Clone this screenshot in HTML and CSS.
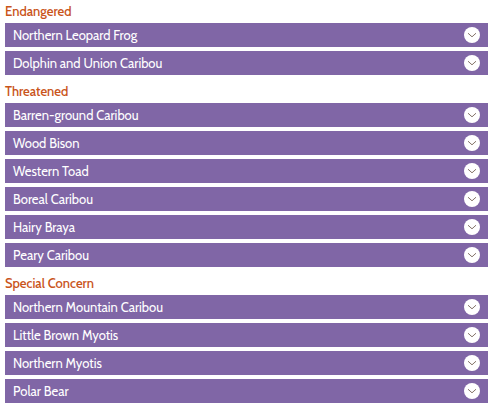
FILE: index.html
```
<!DOCTYPE html>
<html lang="en">
<head>
<meta charset="utf-8">
<title>Species at risk</title>
<link rel="stylesheet" href="styles.css">
</head>
<body>
<svg class="symbols" aria-hidden="true">
  <symbol id="chevron" viewBox="0 0 16 16">
    <circle cx="8" cy="8" r="8" fill="#fff"/>
    <path d="M4 6.2 L8 9.8 L12 6.2" fill="none" stroke="#857469" stroke-width="1"/>
  </symbol>
</svg>
<main class="species">
  <section class="group">
    <h2 class="group-title">Endangered</h2>
    <button class="item" type="button" aria-expanded="false">Northern Leopard Frog<svg class="icon"><use href="#chevron"/></svg></button>
    <button class="item" type="button" aria-expanded="false">Dolphin and Union Caribou<svg class="icon"><use href="#chevron"/></svg></button>
  </section>
  <section class="group">
    <h2 class="group-title">Threatened</h2>
    <button class="item" type="button" aria-expanded="false">Barren-ground Caribou<svg class="icon"><use href="#chevron"/></svg></button>
    <button class="item" type="button" aria-expanded="false">Wood Bison<svg class="icon"><use href="#chevron"/></svg></button>
    <button class="item" type="button" aria-expanded="false">Western Toad<svg class="icon"><use href="#chevron"/></svg></button>
    <button class="item" type="button" aria-expanded="false">Boreal Caribou<svg class="icon"><use href="#chevron"/></svg></button>
    <button class="item" type="button" aria-expanded="false">Hairy Braya<svg class="icon"><use href="#chevron"/></svg></button>
    <button class="item" type="button" aria-expanded="false">Peary Caribou<svg class="icon"><use href="#chevron"/></svg></button>
  </section>
  <section class="group">
    <h2 class="group-title">Special Concern</h2>
    <button class="item" type="button" aria-expanded="false">Northern Mountain Caribou<svg class="icon"><use href="#chevron"/></svg></button>
    <button class="item" type="button" aria-expanded="false">Little Brown Myotis<svg class="icon"><use href="#chevron"/></svg></button>
    <button class="item" type="button" aria-expanded="false">Northern Myotis<svg class="icon"><use href="#chevron"/></svg></button>
    <button class="item" type="button" aria-expanded="false">Polar Bear<svg class="icon"><use href="#chevron"/></svg></button>
  </section>
</main>
</body>
</html>
```
FILE: styles.css
```
body {
  margin: 0;
  background: #fff;
  font-family: Cabin, Lato, "Liberation Sans", sans-serif;
  font-size: 13px;
}

.symbols {
  display: none;
}

.species {
  display: flex;
  flex-direction: column;
  gap: 5px;
  padding: 0 3px 3px 5px;
}

.group {
  display: flex;
  flex-direction: column;
  gap: 4px;
}

.group-title {
  margin: 0 0 -4px;
  color: #c9541a;
  font-size: 13px;
  font-weight: 500;
  line-height: 23px;
}

.item {
  display: flex;
  align-items: center;
  justify-content: space-between;
  padding: 0 8px;
  border: 0;
  background: #8066a6;
  color: #fff;
  font: inherit;
  line-height: 24px;
  text-align: left;
  cursor: pointer;
}

.icon {
  flex: none;
  width: 16px;
  height: 16px;
}
```
